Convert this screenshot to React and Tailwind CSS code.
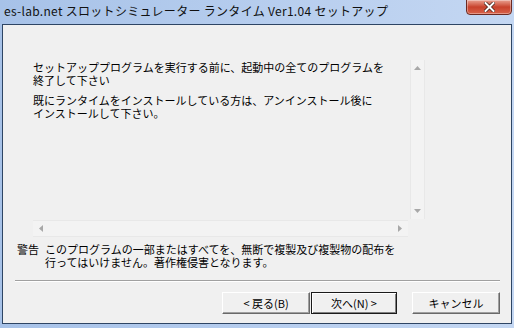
import React from "react";

const jp = { fontFamily: '"Noto Sans CJK JP", "Liberation Sans", sans-serif' };

function ClassicButton({ children, isDefault }) {
  return (
    <div
      className={
        "h-[22px] flex items-center justify-center bg-[#f0f0f0] text-[11px] text-black " +
        (isDefault
          ? "border border-[#1a1a1a] shadow-[inset_1px_1px_0_#ffffff,inset_-1px_-1px_0_#808080]"
          : "border-t border-l border-t-white border-l-white border-r border-b border-r-[#696969] border-b-[#696969] shadow-[inset_-1px_-1px_0_#a0a0a0]")
      }
    >
      {children}
    </div>
  );
}

export default function App() {
  return (
    <div
      className="w-[514px] h-[328px] flex flex-col bg-gradient-to-r from-[#a7c2e8] via-[#b6cdee] to-[#c4d7f2] overflow-hidden"
      style={jp}
    >
      {/* title bar */}
      <div className="h-[24px] flex items-start justify-between pl-[4px] pr-[2px]">
        <span className="text-[12px] leading-[12px] mt-[5px] text-[#111] tracking-[0.3px]">
          es-lab.net スロットシミュレーター ランタイム Ver1.04 セットアップ
        </span>
        <div className="w-[46px] h-[16px] -mt-[1px] rounded-b-[4px] border border-[#6b2a22] bg-gradient-to-b from-[#e8a091] via-[#c8412c] to-[#d8624a] flex items-center justify-center shadow-[inset_0_0_0_1px_rgba(255,255,255,0.35)]">
          <svg width="11" height="10" viewBox="0 0 11 10">
            <path d="M1.5 1 L9.5 9 M9.5 1 L1.5 9" stroke="#3a1a14" strokeWidth="3.4" strokeLinecap="square" />
            <path d="M1.5 1 L9.5 9 M9.5 1 L1.5 9" stroke="#ffffff" strokeWidth="2" strokeLinecap="square" />
          </svg>
        </div>
      </div>

      {/* client area */}
      <div className="flex-1 mx-[2px] mb-[4px] border border-[#2e4564] bg-[#f0f0f0] flex flex-col">
        {/* text box */}
        <div className="ml-[27px] mt-[33px] w-[395px] h-[179px] flex flex-col">
          <div className="flex flex-1">
            <div className="flex-1 pl-[3px] pt-[3px] text-[11px] leading-[13px] text-black">
              <p>セットアッププログラムを実行する前に、起動中の全てのプログラムを</p>
              <p>終了して下さい</p>
              <p className="mt-[7px]">既にランタイムをインストールしている方は、アンインストール後に</p>
              <p>インストールして下さい。</p>
            </div>
            <div className="w-[15px] mt-[2px] mb-[1px] bg-[#f3f3f3] border-x border-[#e8e8e8] flex flex-col items-center justify-between py-[6px]">
              <svg width="7" height="4" viewBox="0 0 7 4"><path d="M0 4 L3.5 0 L7 4 Z" fill="#a8a8a8" /></svg>
              <svg width="7" height="4" viewBox="0 0 7 4"><path d="M0 0 L3.5 4 L7 0 Z" fill="#a8a8a8" /></svg>
            </div>
          </div>
          <div className="h-[17px] ml-[3px] w-[375px] bg-[#f3f3f3] border-y border-[#e8e8e8] flex items-center justify-between px-[6px]">
            <svg width="4" height="7" viewBox="0 0 4 7"><path d="M4 0 L0 3.5 L4 7 Z" fill="#a8a8a8" /></svg>
            <svg width="4" height="7" viewBox="0 0 4 7"><path d="M0 0 L4 3.5 L0 7 Z" fill="#a8a8a8" /></svg>
          </div>
        </div>

        {/* warning */}
        <div className="mt-[6px] ml-[14px] flex gap-[6px] text-[11px] leading-[13px] text-black">
          <span>警告</span>
          <div>
            <p>このプログラムの一部またはすべてを、無断で複製及び複製物の配布を</p>
            <p>行ってはいけません。著作権侵害となります。</p>
          </div>
        </div>

        {/* separator */}
        <div className="mt-[11px] ml-[12px] mr-[11px] h-[2px] border-t border-[#a0a0a0] border-b border-b-white" />

        {/* buttons */}
        <div className="mt-[10px] ml-[219px] flex">
          <div className="w-[88px]">
            <ClassicButton>&lt; 戻る(B)</ClassicButton>
          </div>
          <div className="w-[86px] ml-[1px]">
            <ClassicButton isDefault>次へ(N) &gt;</ClassicButton>
          </div>
          <div className="w-[88px] ml-[15px]">
            <ClassicButton>キャンセル</ClassicButton>
          </div>
        </div>
      </div>
    </div>
  );
}
